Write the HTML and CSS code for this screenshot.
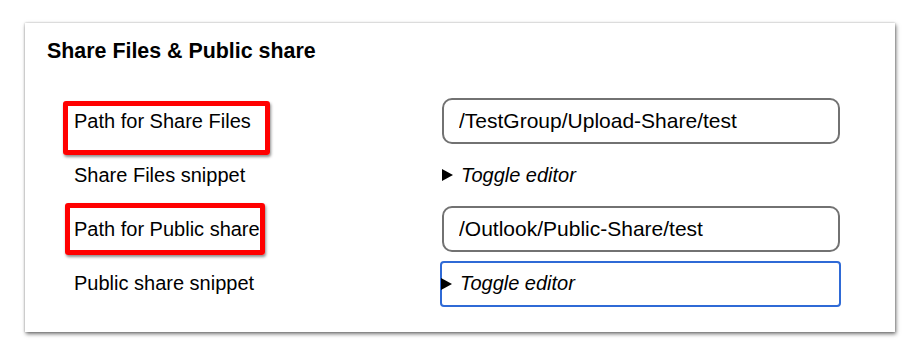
FILE: index.html
```html
<!DOCTYPE html>
<html lang="en">
<head>
  <meta charset="UTF-8">
  <title>Share Files &amp; Public share</title>
  <link rel="stylesheet" href="styles.css">
</head>
<body>
  <div class="panel">
    <h2 class="panel-title">Share Files &amp; Public share</h2>
    <div class="settings">
      <div class="label">
        Path for Share Files
        <span class="mark mark-one"></span>
      </div>
      <div class="value">
        <input class="path" type="text" value="/TestGroup/Upload-Share/test">
      </div>

      <div class="label">Share Files snippet</div>
      <div class="value">
        <details class="snippet">
          <summary>Toggle editor</summary>
        </details>
      </div>

      <div class="label">
        Path for Public share
        <span class="mark mark-two"></span>
      </div>
      <div class="value">
        <input class="path" type="text" value="/Outlook/Public-Share/test">
      </div>

      <div class="label">Public share snippet</div>
      <div class="value">
        <details class="snippet focused">
          <summary>Toggle editor</summary>
        </details>
      </div>
    </div>
  </div>
</body>
</html>
```

FILE: styles.css
```css
/* Settings panel */
body {
  margin: 0;
  padding: 23px 25px;
  background: #fff;
  font-family: "Liberation Sans", Arial, sans-serif;
  color: #000;
}

.panel {
  width: 870px;
  height: 309px;
  box-sizing: border-box;
  padding: 16px 22px 0;
  background: #fff;
  box-shadow: 1px 2px 4px rgba(0, 0, 0, 0.55), 0 0 2px rgba(0, 0, 0, 0.25);
}

.panel-title {
  margin: 0;
  font-size: 21.4px;
  line-height: 24px;
  font-weight: bold;
}

.settings {
  display: grid;
  grid-template-columns: 368px 398px;
  grid-template-rows: 46px 46px 46px 46px;
  row-gap: 8px;
  margin: 35px 0 0 27px;
}

.label {
  position: relative;
  display: flex;
  align-items: center;
  font-size: 20px;
}

.value {
  display: flex;
  align-items: center;
}

.path {
  width: 100%;
  height: 46px;
  box-sizing: border-box;
  margin: 0;
  padding: 0 15px;
  border: 2px solid #727272;
  border-radius: 10px;
  font-family: "Liberation Sans", Arial, sans-serif;
  font-size: 21px;
  color: #000;
  background: #fff;
}

.snippet {
  flex: none;
  width: 100%;
  height: 46px;
  box-sizing: border-box;
  display: flex;
  align-items: center;
}

.snippet summary {
  display: flex;
  align-items: center;
  list-style: none;
  font-size: 20px;
  font-style: italic;
  cursor: pointer;
}

.snippet summary::-webkit-details-marker {
  display: none;
}

.snippet summary::before {
  content: "";
  width: 0;
  height: 0;
  margin: 0 8px 0 0;
  border-top: 6px solid transparent;
  border-bottom: 6px solid transparent;
  border-left: 11px solid #000;
}

.snippet.focused {
  width: 401px;
  margin: 1px 0 0 -2px;
  border: 2px solid #2f6ad6;
  border-radius: 4px;
}

.snippet.focused summary::before {
  margin-left: -1px;
}

/* red annotation boxes */
.mark {
  position: absolute;
  box-sizing: border-box;
  border: 5px solid #ff0000;
  border-radius: 3px;
  box-shadow: 1px 2px 3px rgba(0, 0, 0, 0.45);
  pointer-events: none;
}

.mark-one {
  left: -11px;
  top: 3px;
  width: 207px;
  height: 54px;
}

.mark-two {
  left: -9px;
  top: -3px;
  width: 200px;
  height: 52px;
}
```
